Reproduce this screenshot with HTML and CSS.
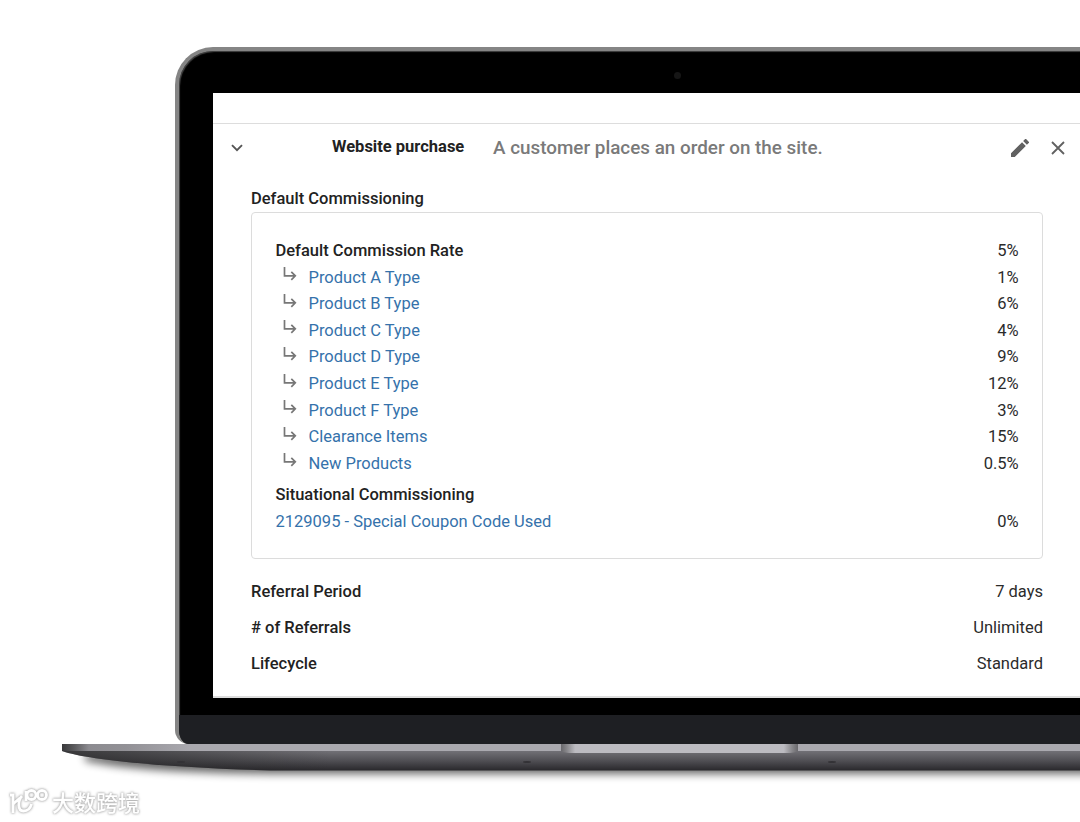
FILE: index.html
```
<!DOCTYPE html>
<html lang="en">
<head>
    <meta charset="UTF-8">
    <meta name="viewport" content="width=device-width, initial-scale=1.0">
    <title>Website purchase</title>
    <link rel="stylesheet" href="styles.css">
</head>
<body>
    <svg width="0" height="0" class="symbols">
        <symbol id="sub-arrow" viewBox="0 0 14 14">
            <path d="M1.5 0V8.8H12M8.3 4.800L12.3 8.800L8.300 12.800" fill="none" stroke="#777" stroke-width="1.700"/>
        </symbol>
    </svg>

    <div class="lid">
        <div class="bezel"><span class="camera"></span></div>
        <div class="screen">
            <header class="action">
                <svg class="chevron" width="12" height="8" viewBox="0 0 12 8"><path d="M1 1.2L6 6.2L11 1.2" fill="none" stroke="#555" stroke-width="1.9"/></svg>
                <h2>Website purchase</h2>
                <p>A customer places an order on the site.</p>
                <svg class="edit" width="18" height="18" viewBox="3 3 18 18"><path fill="#616161" d="M3 17.25V21h3.75L17.81 9.94l-3.75-3.75L3 17.25zM20.71 7.04a1 1 0 0 0 0-1.41l-2.34-2.34a1 1 0 0 0-1.41 0l-1.83 1.83 3.75 3.75 1.83-1.83z"/></svg>
                <svg class="close" width="14" height="14" viewBox="0 0 14 14"><path d="M1 1L13 13M13 1L1 13" fill="none" stroke="#616161" stroke-width="1.8"/></svg>
            </header>

            <main class="details">
                <h3>Default Commissioning</h3>
                <div class="card">
                    <div class="row"><b>Default Commission Rate</b><span>5%</span></div>
                    <div class="row"><svg><use href="#sub-arrow"/></svg><a>Product A Type</a><span>1%</span></div>
                    <div class="row"><svg><use href="#sub-arrow"/></svg><a>Product B Type</a><span>6%</span></div>
                    <div class="row"><svg><use href="#sub-arrow"/></svg><a>Product C Type</a><span>4%</span></div>
                    <div class="row"><svg><use href="#sub-arrow"/></svg><a>Product D Type</a><span>9%</span></div>
                    <div class="row"><svg><use href="#sub-arrow"/></svg><a>Product E Type</a><span>12%</span></div>
                    <div class="row"><svg><use href="#sub-arrow"/></svg><a>Product F Type</a><span>3%</span></div>
                    <div class="row"><svg><use href="#sub-arrow"/></svg><a>Clearance Items</a><span>15%</span></div>
                    <div class="row"><svg><use href="#sub-arrow"/></svg><a>New Products</a><span>0.5%</span></div>
                    <div class="row situational"><b>Situational Commissioning</b></div>
                    <div class="row"><a>2129095 - Special Coupon Code Used</a><span>0%</span></div>
                </div>
                <div class="terms">
                    <div class="row"><b>Referral Period</b><span>7 days</span></div>
                    <div class="row"><b># of Referrals</b><span>Unlimited</span></div>
                    <div class="row"><b>Lifecycle</b><span>Standard</span></div>
                </div>
            </main>
        </div>
        <div class="chin"></div>
    </div>

    <svg class="base" width="1080" height="44" viewBox="0 0 1080 44">
        <defs>
            <linearGradient id="under" x1="0" y1="0" x2="0" y2="1">
                <stop offset="0.2" stop-color="#77767c"/>
                <stop offset="0.6" stop-color="#535257"/>
                <stop offset="1" stop-color="#29282c"/>
            </linearGradient>
            <linearGradient id="edge" gradientUnits="userSpaceOnUse" x1="62" y1="0" x2="190" y2="0">
                <stop offset="0" stop-color="#38383a"/>
                <stop offset="0.1" stop-color="#5c5c5f"/>
                <stop offset="0.21" stop-color="#8c8b90"/>
                <stop offset="0.5" stop-color="#929196"/>
                <stop offset="1" stop-color="#aaa9af"/>
            </linearGradient>
            <linearGradient id="dim" gradientUnits="userSpaceOnUse" x1="62" y1="0" x2="330" y2="0">
                <stop offset="0" stop-color="#222" stop-opacity="0.7"/>
                <stop offset="1" stop-color="#222" stop-opacity="0"/>
            </linearGradient>
            <linearGradient id="notch" x1="0" y1="0" x2="1" y2="0">
                <stop offset="0" stop-color="#69686c"/>
                <stop offset="0.025" stop-color="#88878b"/>
                <stop offset="0.06" stop-color="#bcbbc1"/>
                <stop offset="0.94" stop-color="#bcbbc1"/>
                <stop offset="0.975" stop-color="#88878b"/>
                <stop offset="1" stop-color="#69686c"/>
            </linearGradient>
            <filter id="soft" x="-10%" y="-50%" width="120%" height="250%"><feGaussianBlur stdDeviation="4"/></filter>
        </defs>
        <path d="M85 17C130 26 190 29 270 30H1100V10H85Z" fill="#000" opacity="0.6" filter="url(#soft)"/>
        <path d="M62 0H1080V26.5H270C180 24 90 17 62 7Z" fill="url(#under)"/>
        <path d="M62 0H1080V26.5H270C180 24 90 17 62 7Z" fill="url(#dim)"/>
        <path d="M62 0H1080V7H62Z" fill="url(#edge)"/>
        <path d="M561 0H798V7Q795 9 786 9H573Q564 9 561 7Z" fill="url(#notch)"/>
        <g fill="#333236">
            <ellipse cx="181" cy="18" rx="4" ry="1"/>
            <ellipse cx="527" cy="18" rx="4" ry="1"/>
            <ellipse cx="832" cy="18" rx="4" ry="1"/>
        </g>
    </svg>

    <footer class="watermark">
        <svg width="40" height="28" viewBox="0 0 40 28">
            <g fill="none" stroke="#fff" stroke-width="2.8">
                <path d="M2 8H5V26"/>
                <path d="M14 9C10 13 9 24 15.500 24C20 24 22.500 21 23.500 17M5 17L12 11"/>
                <path d="M18 4V14"/>
                <circle cx="23.500" cy="8" r="4.5"/>
                <circle cx="34" cy="8" r="4.5"/>
            </g>
        </svg>
        <span>大数跨境</span>
    </footer>
</body>
</html>
```
FILE: styles.css
```
* {
    box-sizing: border-box;
}

body {
    margin: 0;
    padding-top: 47px;
    height: 822px;
    overflow: hidden;
    background-color: #fff;
    font-family: Roboto, sans-serif;
    font-size: 16.5px;
    color: #2b2b2b;
}

h2, h3, p {
    margin: 0;
}

b, h3 {
    font-weight: 500;
    font-size: 16.5px;
    color: #222;
}

a {
    color: #3572ab;
}

.symbols {
    display: block;
    height: 0;
}

.lid {
    height: 697px;
    margin-left: 175px;
    border: 4px solid #858585;
    border-right: none;
    border-bottom: none;
    border-radius: 38px 0 0 14px;
    background-color: #000;
    box-shadow: inset 1px 1px 1px #444;
    overflow: hidden;
}

.bezel {
    height: 42px;
    display: flex;
    padding: 21px 0 0 495px;
}

.camera {
    width: 7px;
    height: 7px;
    border-radius: 50%;
    background-color: #161616;
}

.screen {
    height: 605px;
    margin-left: 34px;
    padding-top: 30px;
    background-color: #fff;
    border-bottom: 2px solid #ddd;
}

.chin {
    height: 46px;
    margin-top: 17px;
    background-color: #1e1f23;
}

.action {
    height: 49px;
    border-top: 1px solid #ddd;
    display: flex;
    align-items: center;
    padding: 0 15px 0 18px;
}

.action h2 {
    margin: -3px 0 0 89px;
    width: 161px;
    font-size: 16.5px;
    font-weight: 700;
    color: #222;
    white-space: nowrap;
}

.action p {
    font-size: 18.85px;
    font-weight: 500;
    color: #7a7a7a;
    white-space: nowrap;
}

.edit {
    margin-left: auto;
    margin-right: 22px;
}

.details {
    padding: 15px 37px 0 38px;
}

.details h3 {
    height: 25px;
    line-height: 24px;
}

.card {
    height: 347px;
    padding: 24.3px 23.4px 0 23.5px;
    border: 1px solid #dcdcdc;
    border-radius: 4px;
}

.row {
    height: 26.6px;
    display: flex;
    align-items: center;
}

.row svg {
    width: 14px;
    height: 14px;
    margin: -6px 12px 0 7px;
}

.row span {
    margin-left: auto;
}

.situational {
    margin-top: 4.5px;
}

.terms .row {
    height: 36px;
}

.terms {
    padding-top: 14.4px;
}

.base {
    display: block;
}

.watermark {
    display: flex;
    align-items: center;
    padding-left: 8px;
    height: 26px;
    color: #fff;
    font: 500 22px "Noto Sans CJK SC", sans-serif;
    filter: drop-shadow(0 0 1px #aaa) drop-shadow(0 0 1px #ccc);
}

.watermark span {
    margin-left: 4px;
}
```
